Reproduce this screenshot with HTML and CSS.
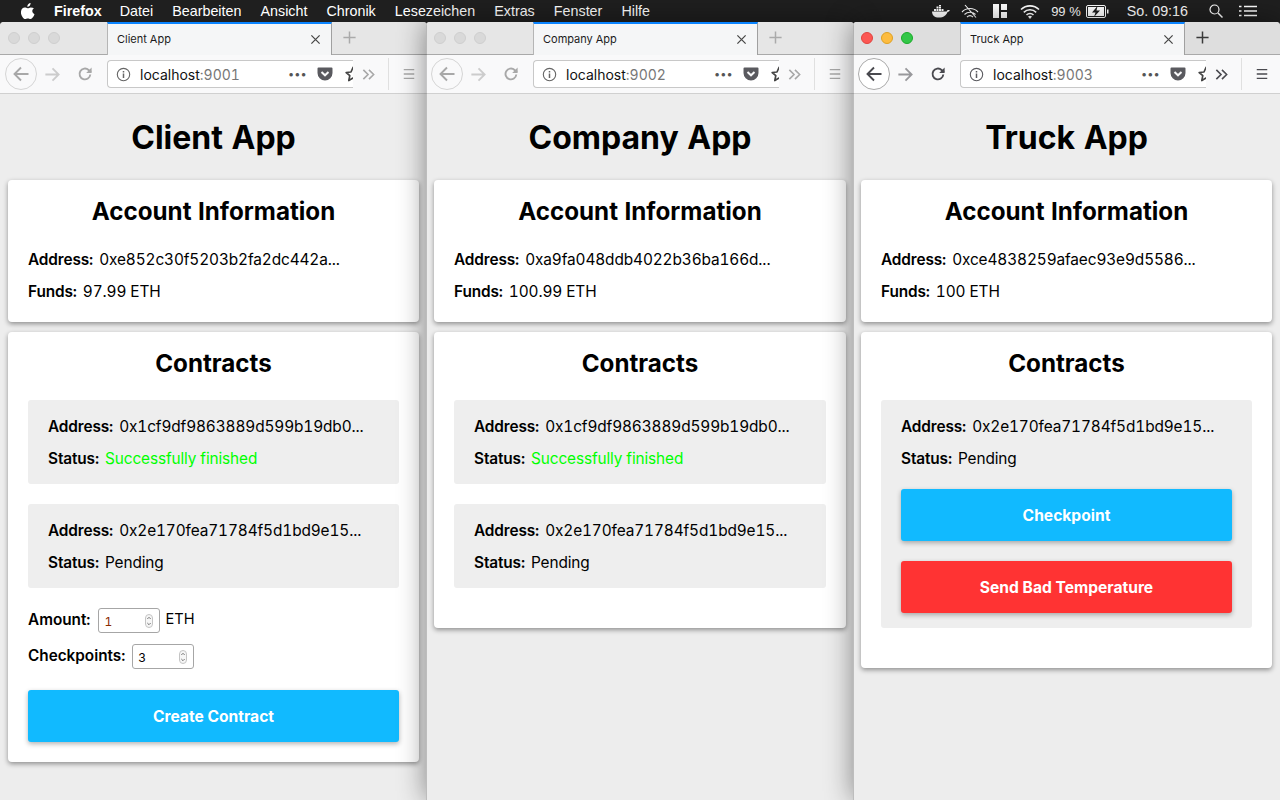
FILE: index.html
```html
<!DOCTYPE html>
<html lang="de">
<head>
<meta charset="utf-8">
<title>Apps</title>
<link rel="stylesheet" href="styles.css">
</head>
<body>
<svg class="defs" width="0" height="0" aria-hidden="true">
  <symbol id="i-back" viewBox="0 0 16 16"><path d="M14 8H3M8 2.8 2.8 8 8 13.2" fill="none" stroke="currentColor" stroke-width="1.500"/></symbol>
  <symbol id="i-reload" viewBox="0 0 16 16"><path d="M13.3 8.5A5.4 5.4 0 1 1 11.6 4L14 6" fill="none" stroke="currentColor" stroke-width="1.9"/><path d="M14.6 1.6V7H9.2Z" fill="currentColor"/></symbol>
  <symbol id="i-info" viewBox="0 0 16 16"><circle cx="8" cy="8" r="6.6" fill="none" stroke="currentColor" stroke-width="1.2"/><path d="M7.2 7h1.6v4.6H7.2zM7.2 4.2h1.6v1.6H7.2z" fill="currentColor"/></symbol>
  <symbol id="i-pocket" viewBox="0 0 16 16"><path d="M1.5 1.5h13a1 1 0 0 1 1 1V7a7.5 7.5 0 0 1-15 0V2.500a1 1 0 0 1 1-1Z" fill="currentColor"/><path d="M4.500 6 8 9.300 11.500 6" fill="none" stroke="#f9f9fa" stroke-width="2"/></symbol>
  <symbol id="i-star" viewBox="0 0 16 16"><path d="M8 1.500 10 6l4.800.5-3.600 3.200L12.200 14.500 8 12l-4.200 2.500 1-4.800L1.200 6.500 6 6Z" fill="none" stroke="currentColor" stroke-width="1.700" stroke-linejoin="round"/></symbol>
  <symbol id="i-more" viewBox="0 0 16 16"><path d="M2.500 3 7.500 8l-5 5M8.500 3l5 5-5 5" fill="none" stroke="currentColor" stroke-width="1.700"/></symbol>
  <symbol id="i-menu" viewBox="0 0 16 16"><path d="M2 3h12M2 8h12M2 13h12" stroke="currentColor" stroke-width="1.700"/></symbol>
  <symbol id="i-close" viewBox="0 0 12 12"><path d="M1.500 1.500l9 9M10.500 1.500l-9 9" stroke="currentColor" stroke-width="1.400"/></symbol>
  <symbol id="i-plus" viewBox="0 0 16 16"><path d="M8 1.500v13M1.500 8h13" stroke="currentColor" stroke-width="1.600"/></symbol>
  <symbol id="i-spin" viewBox="0 0 8 14"><rect x=".5" y=".5" width="7" height="13" rx="3.500" fill="#f6f6f6" stroke="#c4c4c4"/><path d="M2.300 5 4 3.300 5.700 5M2.300 9 4 10.700 5.700 9" fill="none" stroke="#666" stroke-width=".9"/></symbol>
</svg>

<header class="menubar">
  <svg class="apple" viewBox="0 0 14 16" width="14" height="16"><path fill="#fff" d="M9.600 0c.1 1.100-.3 2-.9 2.700-.6.700-1.500 1.200-2.400 1.100-.1-1 .4-2 .9-2.600C7.800.5 8.800.1 9.600 0ZM13 5.300c-1.100.7-1.700 1.600-1.700 2.800 0 1.400.8 2.500 2.200 3.100-.3 1-.8 1.900-1.400 2.800-.9 1.300-1.700 2-2.600 2-1 0-1.500-.6-2.700-.6-1.200 0-1.700.6-2.700.6-.9 0-1.700-.7-2.600-2.100C.3 12.300-.3 10.300 0 8.500.3 6.100 1.900 4.500 3.800 4.500c1.100 0 1.900.7 2.900.7.900 0 1.700-.8 3-.8 1.300 0 2.500.3 3.300.9Z"/></svg>
  <nav class="menu">
    <span class="menu-app">Firefox</span><span>Datei</span><span>Bearbeiten</span><span>Ansicht</span><span>Chronik</span><span>Lesezeichen</span><span>Extras</span><span>Fenster</span><span>Hilfe</span>
  </nav>
  <div class="status">
    <svg class="st-docker" viewBox="0 0 18 13" width="18" height="13"><path fill="#fff" d="M0 6.500h14.200c.6 0 1-.7 1.100-1.300.7-.3 1.700-.3 2.500.1-.4 1-1.300 1.600-2.300 1.600-1.200 3.400-4 5.600-8.500 5.600C2.500 12.500.3 10.500 0 6.500ZM2 4h2v2H2zM4.500 4h2v2h-2zM7 4h2v2H7zM9.500 4h2v2h-2zM4.500 1.500h2v2h-2zM7 1.500h2v2H7zM7-1h2v2H7z"/></svg>
    <svg class="st-arc" viewBox="0 0 18 14" width="18" height="14"><path d="M1 8a11 11 0 0 1 16 0M3.500 10.500a8 8 0 0 1 11 0M6 13a4.500 4.500 0 0 1 6 0M4 1l11 12.500" fill="none" stroke="#fff" stroke-width="1.100"/></svg>
    <svg class="st-grid" viewBox="0 0 14 14" width="14" height="14"><path fill="#fff" d="M0 0h6v14H0zM8 0h6v6H8zM8 8h6v6H8z"/></svg>
    <svg class="st-wifi" viewBox="0 0 20 15" width="20" height="15"><path d="M1 5.500a13 13 0 0 1 18 0M3.800 8.300a9 9 0 0 1 12.400 0M6.500 11a5 5 0 0 1 7 0" fill="none" stroke="#fff" stroke-width="1.600"/><path fill="#fff" d="m10 15-2-2.400a3 3 0 0 1 4 0Z"/></svg>
    <span class="st-pct">99 %</span>
    <svg class="st-batt" viewBox="0 0 23 13" width="23" height="13"><rect x=".5" y=".5" width="19" height="12" rx="1.500" fill="none" stroke="#fff"/><path fill="#fff" d="M2 2h16v9H2zM21 4.500h1.500v4H21z"/><path fill="#1e1e1e" d="M11.500 1 6 7.500h3.500L8 12l6-6.500h-3.500Z"/></svg>
    <span class="st-clock">So. 09:16</span>
    <svg class="st-search" viewBox="0 0 14 14" width="14" height="14"><circle cx="5.500" cy="5.500" r="4.500" fill="none" stroke="#fff" stroke-width="1.200"/><path d="m9 9 4.500 4.500" stroke="#fff" stroke-width="1.500"/></svg>
    <svg class="st-list" viewBox="0 0 18 12" width="18" height="12"><path d="M0 1.500h2.500M0 6h2.500M0 10.500h2.500M5 1.500h13M5 6h13M5 10.500h13" stroke="#fff" stroke-width="1.700"/></svg>
  </div>
</header>

<main class="desktop">

  <section class="window window-side inactive">
    <div class="tabstrip">
      <div class="lights"><i></i><i></i><i></i></div>
      <div class="tab"><span class="tab-title">Client App</span><svg class="tab-close"><use href="#i-close"/></svg></div>
      <svg class="tab-plus"><use href="#i-plus"/></svg>
    </div>
    <div class="navbar">
      <span class="back"><svg><use href="#i-back"/></svg></span>
      <svg class="fwd"><use href="#i-back"/></svg>
      <svg class="reload"><use href="#i-reload"/></svg>
      <div class="urlbar"><svg class="info"><use href="#i-info"/></svg><span class="url">localhost<span class="port">:9001</span></span><span class="dots">•••</span><svg class="pocket"><use href="#i-pocket"/></svg><svg class="star"><use href="#i-star"/></svg></div>
      <svg class="more"><use href="#i-more"/></svg>
      <span class="sep"></span>
      <svg class="burger"><use href="#i-menu"/></svg>
    </div>
    <div class="page">
      <h1>Client App</h1>
      <div class="card">
        <h2>Account Information</h2>
        <p><b>Address:</b> 0xe852c30f5203b2fa2dc442a...</p>
        <p><b>Funds:</b> 97.99 ETH</p>
      </div>
      <div class="card card-end">
        <h2 class="h2-contracts">Contracts</h2>
        <div class="contract">
          <p><b>Address:</b> 0x1cf9df9863889d599b19db0...</p>
          <p><b>Status:</b> <span class="ok">Successfully finished</span></p>
        </div>
        <div class="contract">
          <p><b>Address:</b> 0x2e170fea71784f5d1bd9e15...</p>
          <p><b>Status:</b> Pending</p>
        </div>
        <div class="field field-first"><b>Amount:</b> <span class="num num-red">1<svg class="spin"><use href="#i-spin"/></svg></span> <span class="unit">ETH</span></div>
        <div class="field"><b>Checkpoints:</b> <span class="num">3<svg class="spin"><use href="#i-spin"/></svg></span></div>
        <button class="btn btn-blue btn-create">Create Contract</button>
      </div>
    </div>
  </section>

  <section class="window window-mid inactive">
    <div class="tabstrip">
      <div class="lights"><i></i><i></i><i></i></div>
      <div class="tab"><span class="tab-title">Company App</span><svg class="tab-close"><use href="#i-close"/></svg></div>
      <svg class="tab-plus"><use href="#i-plus"/></svg>
    </div>
    <div class="navbar">
      <span class="back"><svg><use href="#i-back"/></svg></span>
      <svg class="fwd"><use href="#i-back"/></svg>
      <svg class="reload"><use href="#i-reload"/></svg>
      <div class="urlbar"><svg class="info"><use href="#i-info"/></svg><span class="url">localhost<span class="port">:9002</span></span><span class="dots">•••</span><svg class="pocket"><use href="#i-pocket"/></svg><svg class="star"><use href="#i-star"/></svg></div>
      <svg class="more"><use href="#i-more"/></svg>
      <span class="sep"></span>
      <svg class="burger"><use href="#i-menu"/></svg>
    </div>
    <div class="page">
      <h1>Company App</h1>
      <div class="card">
        <h2>Account Information</h2>
        <p><b>Address:</b> 0xa9fa048ddb4022b36ba166d...</p>
        <p><b>Funds:</b> 100.99 ETH</p>
      </div>
      <div class="card card-tail">
        <h2 class="h2-contracts">Contracts</h2>
        <div class="contract">
          <p><b>Address:</b> 0x1cf9df9863889d599b19db0...</p>
          <p><b>Status:</b> <span class="ok">Successfully finished</span></p>
        </div>
        <div class="contract">
          <p><b>Address:</b> 0x2e170fea71784f5d1bd9e15...</p>
          <p><b>Status:</b> Pending</p>
        </div>
      </div>
    </div>
  </section>

  <section class="window window-side active">
    <div class="tabstrip">
      <div class="lights"><i class="red"></i><i class="yellow"></i><i class="green"></i></div>
      <div class="tab"><span class="tab-title">Truck App</span><svg class="tab-close"><use href="#i-close"/></svg></div>
      <svg class="tab-plus"><use href="#i-plus"/></svg>
    </div>
    <div class="navbar">
      <span class="back"><svg><use href="#i-back"/></svg></span>
      <svg class="fwd"><use href="#i-back"/></svg>
      <svg class="reload"><use href="#i-reload"/></svg>
      <div class="urlbar"><svg class="info"><use href="#i-info"/></svg><span class="url">localhost<span class="port">:9003</span></span><span class="dots">•••</span><svg class="pocket"><use href="#i-pocket"/></svg><svg class="star"><use href="#i-star"/></svg></div>
      <svg class="more"><use href="#i-more"/></svg>
      <span class="sep"></span>
      <svg class="burger"><use href="#i-menu"/></svg>
    </div>
    <div class="page">
      <h1>Truck App</h1>
      <div class="card">
        <h2>Account Information</h2>
        <p><b>Address:</b> 0xce4838259afaec93e9d5586...</p>
        <p><b>Funds:</b> 100 ETH</p>
      </div>
      <div class="card card-tail">
        <h2 class="h2-contracts">Contracts</h2>
        <div class="contract contract-actions">
          <p><b>Address:</b> 0x2e170fea71784f5d1bd9e15...</p>
          <p><b>Status:</b> Pending</p>
          <button class="btn btn-blue btn-check">Checkpoint</button>
          <button class="btn btn-red">Send Bad Temperature</button>
        </div>
      </div>
    </div>
  </section>

</main>
</body>
</html>
```
FILE: styles.css
```css
* { box-sizing: border-box; }
html, body { margin: 0; padding: 0; height: 800px; overflow: hidden; }
body { font-family: Inter, "Noto Sans", sans-serif; color: #000; background: #333; font-variant-numeric: tabular-nums; }
.defs { position: absolute; }

.menubar { height: 22px; background: #1f1f1f; color: #fff; display: flex; align-items: center; font-family: "Liberation Sans", sans-serif; font-size: 14.3px; padding-left: 21px; }
.apple { flex: none; margin-top: -1px; }
.menu { display: flex; gap: 19.1px; margin-left: 19px; }
.menu-app { font-weight: 700; margin-right: -1px; }
.status { margin-left: auto; display: flex; align-items: center; }
.status span { white-space: nowrap; }
.st-arc { margin-left: 11px; }
.st-grid { margin-left: 14px; }
.st-wifi { margin-left: 13px; }
.st-pct { margin-left: 11px; font-size: 13px; }
.st-batt { margin-left: 5px; }
.st-clock { margin-left: 18px; }
.st-search { margin-left: 21px; }
.st-list { margin-left: 16px; margin-right: 23px; }

.desktop { display: flex; height: 778px; }
.window { position: relative; flex: none; height: 778px; background: #ededed; box-shadow: 0 0 28px rgba(0,0,0,.45); border-radius: 4px 4px 0 0; overflow: hidden; }
.window:first-child { box-shadow: none; }
.window + .window::after { content: ""; position: absolute; left: 0; top: 0; bottom: 0; width: 1px; background: rgba(0,0,0,.2); }
.window-side { width: 427px; }
.window-mid { width: 428px; margin-left: -1px; }
.window-side.active { margin-left: -1px; }

.tabstrip { height: 33px; display: flex; align-items: stretch; background: #dedede; border-bottom: 1px solid #a9a9a9; position: relative; }
.inactive .tabstrip { background: #e6e6e6; }
.lights { width: 107px; display: flex; gap: 8px; padding: 10px 0 0 8px; flex: none; }
.lights i { width: 12px; height: 12px; border-radius: 50%; background: #d9d9d9; border: 1px solid #cfcfcf; }
.lights .red { background: #fc5753; border-color: #e0443e; }
.lights .yellow { background: #fdbc40; border-color: #dea123; }
.lights .green { background: #33c748; border-color: #1aab29; }
.tab { width: 225px; height: 33px; background: #f5f6f7; border-top: 2px solid #0a84ff; border-left: 1px solid #b5b5b5; border-right: 1px solid #a0a0a0; display: flex; align-items: center; padding: 0 10px 0 9px; flex: none; position: relative; }
.tab-title { font-size: 11px; color: #1c1c1c; flex: 1; padding-bottom: 2px; }
.tab-close { width: 11px; height: 11px; color: #4a4a4a; }
.tab-plus { width: 15px; height: 15px; color: #3a3a3a; margin: 8px 0 0 10px; }
.inactive .tab-plus { color: #aaa; }

.navbar { height: 39px; background: #f9f9fa; border-bottom: 1px solid #d0d0d0; position: relative; display: flex; align-items: center; color: #4a4a4f; }
.inactive .navbar { color: #a8a8a8; }
.back { width: 32px; height: 32px; margin-left: 5px; border-radius: 50%; border: 1px solid #aaa; background: #fff; display: flex; align-items: center; justify-content: center; flex: none; }
.inactive .back { border-color: #d5d5d5; background: #f9f9fa; }
.back svg { width: 20px; height: 20px; }
.fwd { width: 19px; height: 19px; margin-left: 6px; transform: scaleX(-1); opacity: .55; flex: none; }
.reload { width: 16px; height: 16px; margin-left: 15px; flex: none; }
.urlbar { width: 246px; height: 28px; margin-left: 14px; background: #fff; border: 1px solid #c8c8c8; border-right: 0; border-radius: 4px 0 0 4px; display: flex; align-items: center; padding-left: 8px; overflow: hidden; flex: none; color: #5a5a5f; }
.info { width: 15px; height: 15px; flex: none; }
.inactive .info { color: #666; }
.url { font-size: 14px; color: #111; margin-left: 9px; width: 148px; flex: none; white-space: nowrap; }
.port { color: #777; }
.dots { font-size: 11px; color: #555; width: 22px; flex: none; }
.pocket { width: 16px; height: 16px; flex: none; margin-left: 7px; color: #5a5a5f; }
.star { width: 16px; height: 16px; flex: none; margin-left: 12px; color: #444; }
.more { width: 15px; height: 15px; margin-left: 8px; flex: none; }
.sep { width: 1px; height: 32px; background: #e0e0e0; margin-left: 12px; flex: none; }
.burger { width: 14px; height: 14px; margin-left: 13px; flex: none; }

.page { padding: 0 8px; }
h1 { margin: 0; font-size: 32px; line-height: 38px; font-weight: 700; text-align: center; padding: 25px 0 23px; }
.card { width: 411px; background: #fff; border-radius: 4px; padding: 18px 20px 10px; box-shadow: 0 2px 5px rgba(0,0,0,.4); margin-bottom: 10px; }
.card-end { padding-bottom: 20px; margin-bottom: 0; }
.card-tail { padding-bottom: 40px; margin-bottom: 0; }
.window-mid .card { width: 412px; }
h2 { margin: 0 0 22px; font-size: 24.2px; line-height: 28px; font-weight: 700; text-align: center; }
.h2-contracts { margin-bottom: 22px; }
p { margin: 0 0 8px; font-size: 15.4px; line-height: 24px; white-space: nowrap; letter-spacing: -.12px; }
b { font-weight: 600; }
p b { margin-right: 2px; }
.contract { background: #eee; border-radius: 3px; padding: 15px 20px 5px; margin-bottom: 20px; }
.contract:last-child { margin-bottom: 0; }
.contract-actions { padding-bottom: 15px; }
.ok { color: #0f0; }

.field { font-size: 15.3px; height: 25px; line-height: 23px; display: flex; align-items: flex-start; gap: 7px; margin-bottom: 11px; }
.field-first { margin-top: 20px; gap: 8px; }
.unit { margin-left: -3px; font-size: 14.6px; }
.num { width: 62px; height: 25px; line-height: normal; border: 1px solid #a6a6a6; border-radius: 3px; font-size: 12px; display: flex; align-items: center; justify-content: space-between; padding: 1px 6px 0 5px; }
.num-red { color: #8a2b00; }
.spin { width: 8px; height: 14px; flex: none; }

.btn { display: block; width: 100%; height: 52px; border: 0; border-radius: 3px; color: #fff; font: 700 15.6px Inter, sans-serif; box-shadow: 0 2px 5px rgba(0,0,0,.3); padding: 0; }
.btn-blue { background: #11baff; }
.btn-red { background: #f33; }
.btn-create { margin-top: 21px; }
.btn-check { margin: 18px 0 20px; }
```
